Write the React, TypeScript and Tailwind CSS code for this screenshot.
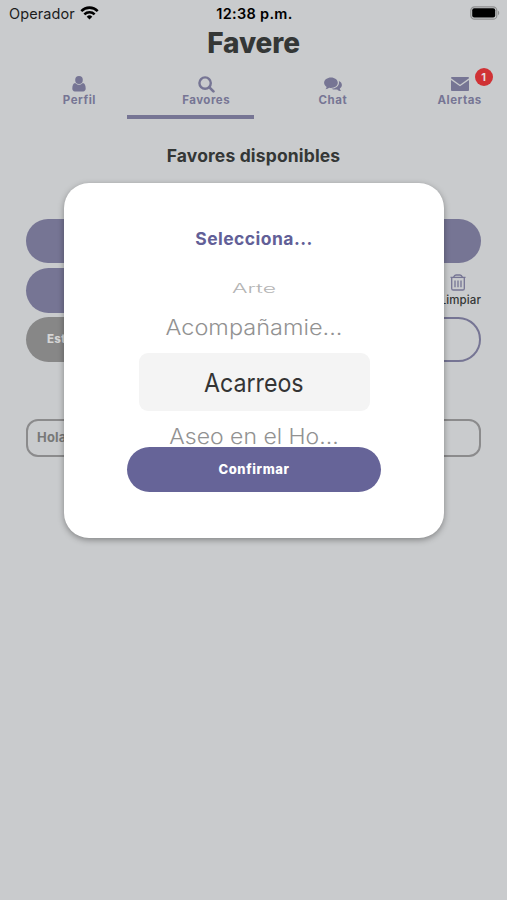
import React, { useState } from 'react'

function UserIcon() {
  return (
    <svg viewBox="0 0 14 16" className="h-[16px] w-[14px]" fill="currentColor">
      <ellipse cx="7" cy="4" rx="3.8" ry="4" />
      <path d="M3.2 7C1.200 7.400.3 9.600.3 12.600c0 1.700 1 2.900 2.500 2.900h8.400c1.500 0 2.500-1.200 2.500-2.900 0-3-.9-5.200-2.900-5.600C9.800 8.200 8.500 8.800 7 8.800S4.200 8.200 3.200 7z" />
    </svg>
  )
}

function SearchIcon() {
  return (
    <svg viewBox="0 0 17 17" className="size-[17px]" fill="none" stroke="currentColor">
      <circle cx="7.1" cy="7.1" r="5.7" strokeWidth="2.4" />
      <path d="m11.400 11.400 4 4" strokeWidth="2.700" strokeLinecap="round" />
    </svg>
  )
}

function ChatIcon() {
  return (
    <svg viewBox="0 0 18 15" className="h-[15px] w-[18px]" fill="currentColor">
      <path d="M7 .6c3.800 0 6.800 2.300 6.800 5.200S10.800 11 7 11c-.6 0-1.200-.1-1.800-.2-1 .8-2.300 1.300-3.800 1.400.7-.7 1.100-1.400 1.200-2.300C1.100 8.900.1 7.500.1 5.800.1 2.900 3.200.6 7 .6z" />
      <path d="M14.900 4c1.800.8 3 2.200 3 3.900 0 1.400-.8 2.600-2.100 3.500.1.900.5 1.700 1.200 2.600-1.500 0-2.800-.7-3.800-1.600-2 .4-4.200.1-5.700-.7 4.300-.1 7.500-2.600 7.500-5.900 0-.6 0-1.200-.1-1.800z" />
    </svg>
  )
}

function MailIcon() {
  return (
    <svg viewBox="0 0 18 14" className="h-[14px] w-[18px]" fill="currentColor">
      <path d="M0 1.200C0 .4.4 0 1.200 0h15.600c.8 0 1.200.4 1.200 1.200L9 7.800z" />
      <path d="M0 2.900 9 9.300l9-6.400v9.900c0 .8-.4 1.200-1.200 1.200H1.200C.4 14 0 13.600 0 12.800z" />
    </svg>
  )
}

function TrashIcon() {
  return (
    <svg viewBox="0 0 16 17" className="ml-px h-[17px] w-[16px]" fill="none" stroke="#767594" strokeWidth="1.3">
      <path d="M0.500 3.400h15" />
      <path d="M3.600 3.200C4.200 1.500 5 1 6 1h4c1 0 1.800.5 2.400 2.200" />
      <path d="M1.700 3.600v10.800c0 1 .6 1.600 1.600 1.600h9.400c1 0 1.600-.6 1.600-1.600V3.600" />
      <path d="M5 6.400v6.800M8 6.400v6.800M11 6.400v6.800" />
    </svg>
  )
}

const tabs = [
  { id: 'perfil', label: 'Perfil', icon: UserIcon, badge: 0 },
  { id: 'favores', label: 'Favores', icon: SearchIcon, badge: 0 },
  { id: 'chat', label: 'Chat', icon: ChatIcon, badge: 0 },
  { id: 'alertas', label: 'Alertas', icon: MailIcon, badge: 1 },
]

function StatusBar() {
  return (
    <div className="grid h-7 grid-cols-3 items-center pl-[9px] pr-[7px] text-black">
      <div className="flex items-center gap-[5px]">
        <span className="text-[14.5px] leading-none tracking-[0.1px] text-[#1c1c1c]">Operador</span>
        <svg viewBox="0 0 20 15" className="-mt-[2px] h-[14px] w-[19px]" fill="none" stroke="black" strokeWidth="2.7">
          <path d="M1.200 5.400a12.400 12.400 0 0 1 17.600 0" />
          <path d="M4.500 8.900a7.800 7.800 0 0 1 11 0" />
          <path d="M10 14.400 7 11.400a4.300 4.300 0 0 1 6 0z" fill="black" stroke="none" />
        </svg>
      </div>
      <span className="text-center text-[14.5px] font-semibold leading-none tracking-[0.3px] whitespace-nowrap">12:38 p.m.</span>
      <svg viewBox="0 0 30 14" className="-mt-[2px] h-[14px] w-[30px] justify-self-end">
        <rect x="0.8" y="0.8" width="26" height="12.4" rx="3.8" fill="none" stroke="#8e8f90" strokeWidth="1.2" />
        <rect x="2.2" y="2.2" width="23" height="9.400" rx="2" fill="black" />
        <path d="M28 4.800c1.600.6 1.600 3.800 0 4.400z" fill="#8e8f90" />
      </svg>
    </div>
  )
}

export default function App() {
  const [active, setActive] = useState('favores')

  return (
    <div className="relative h-[900px] w-[507px] overflow-hidden bg-[#c9cbcd] font-['Inter','Liberation_Sans',sans-serif] text-[#343736]">
      <StatusBar />
      <h1 className="h-[30px] text-center text-[28px] font-extrabold leading-[31px] tracking-[-0.1px]">Favere</h1>

      {/* Tabs */}
      <nav className="mt-[9px] grid h-[52px] grid-cols-4">
        {tabs.map(({ id, label, icon: Icon, badge }) => (
          <button
            key={id}
            onClick={() => setActive(id)}
            className={`flex flex-col items-center border-b-4 pl-8 text-[#767594] ${active === id ? 'border-[#767594]' : 'border-transparent'}`}
          >
            <span className="relative mt-[8px] flex h-[18px] items-center">
              <Icon />
              {badge > 0 && (
                <span className="absolute -top-[7px] left-[24px] flex size-[18px] items-center justify-center rounded-full bg-[#d03235] text-[11px] font-bold text-[#e5dcdd]">
                  {badge}
                </span>
              )}
            </span>
            <span className="text-[11.5px] font-bold leading-[14px] tracking-[0.5px]">{label}</span>
          </button>
        ))}
      </nav>

      <h2 className="mt-[26px] text-center text-[17.5px] font-bold leading-[22px] tracking-[0.15px]">Favores disponibles</h2>

      {/* Filtros */}
      <div className="mt-[52px] flex flex-col gap-[5px] px-[26px]">
        <div className="h-[44px] rounded-full bg-[#767594]" />
        <div className="flex h-[45px] justify-between">
          <div className="w-[360px] rounded-full bg-[#767594]" />
          <div className="flex w-[48px] flex-col items-center pt-[6px]">
            <TrashIcon />
            <span className="mt-[2px] self-end text-[11.5px] font-medium leading-[14px] tracking-[0.1px]">Limpiar</span>
          </div>
        </div>
        <div className="-mt-px flex h-[45px]">
          <div className="flex w-[120px] items-center rounded-full bg-[#878787] pl-[21px] pt-px text-[11.5px] font-extrabold tracking-[0.3px] text-[#d5d5d5]">
            Estado
          </div>
          <div className="flex-1 rounded-r-full border-2 border-[#767594]" />
        </div>
      </div>
      <div className="mx-[26px] mt-[57px] flex h-[38px] items-center rounded-[12px] border-2 border-[#8b8b8c] pl-[9px] text-[13px] font-bold tracking-[0.2px] text-[#777878]">
        Hola
      </div>

      {/* Selector */}
      <div className="absolute left-[64px] top-[183px] flex h-[355px] w-[380px] flex-col items-center rounded-[25px] bg-white shadow-[0_2px_6px_rgba(0,0,0,0.35)]">
        <h3 className="mt-[45px] text-[17.5px] font-bold leading-[22px] tracking-[0.45px] text-[#625f97]">Selecciona...</h3>
        <div className="flex h-[197px] w-full flex-col items-center whitespace-nowrap">
          <span className="mt-[27px] flex h-[24px] shrink-0 items-center text-[23px] font-light text-[#b4b4b4] scale-y-[0.55]">Arte</span>
          <span className="mt-[10px] flex h-[34px] shrink-0 items-center text-[23.5px] font-light text-[#929292] scale-y-[0.9]">Acompañamie...</span>
          <span className="mt-[8px] flex h-[58px] w-[231px] shrink-0 items-center justify-center rounded-[9px] bg-[#f4f4f4] pt-[2px] text-[25.5px] text-[#343434]">
            <span className="scale-x-[0.91]">Acarreos</span>
          </span>
          <span className="mt-[12px] flex h-[28px] shrink-0 items-center text-[23px] font-light leading-[28px] text-[#929292] scale-y-[0.9]">Aseo en el Ho...</span>
        </div>
        <button className="relative h-[45px] w-[254px] shrink-0 rounded-full bg-[#666498] pt-px text-[13px] font-extrabold tracking-[0.6px] text-white">Confirmar</button>
      </div>
    </div>
  )
}
